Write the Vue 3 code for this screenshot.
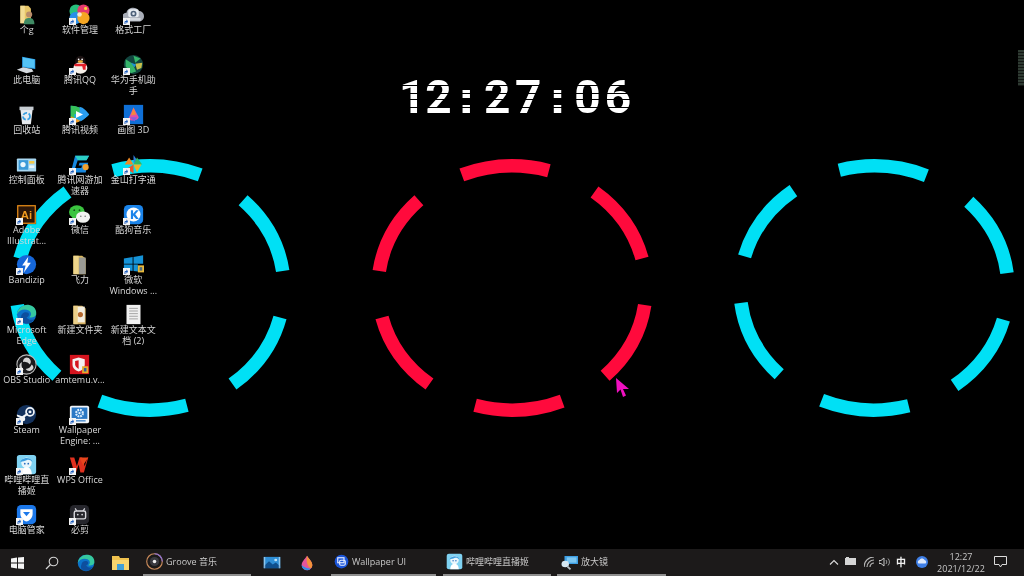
<script setup>
// ring segments: six arcs, 38deg long, every 60deg
const arc = (cx, start) => {
  const rx = 134
  const ry = 122
  const pt = (deg) => {
    const a = (deg * Math.PI) / 180
    return `${(cx + rx * Math.sin(a)).toFixed(1)} ${(288 - ry * Math.cos(a)).toFixed(1)}`
  }
  return [0, 1, 2, 3, 4, 5].map((k) => {
    const s = start + k * 60
    return `M${pt(s)} A${rx} ${ry} 0 0 1 ${pt(s + 38)}`
  })
}

const rings = [
  { id: 'left', color: '#00e0f5', arcs: arc(150, -16) },
  { id: 'mid', color: '#ff0a3c', arcs: arc(512, -22) },
  { id: 'right', color: '#00e0f5', arcs: arc(874, -15) },
]

// the clock's characters sit unevenly, so each one gets its own cell width
const clockChars = [
  { c: '1', w: 26.5 },
  { c: '2', w: 26 },
  { c: ':', w: 29.5 },
  { c: '2', w: 32.5 },
  { c: '7', w: 29.5 },
  { c: ':', w: 29 },
  { c: '0', w: 31 },
  { c: '6', w: 30 },
]

const art = {
  user: '<path d="M5 2h9l3 3v17H5z" fill="#e8c667"/><path d="M5 2h5v20H5z" fill="#f3dc94"/><circle cx="15" cy="12" r="3.5" fill="#b98c6a"/><path d="M9 23c0-6 3-7 6-7s6 1 6 7z" fill="#3f8a63"/>',
  petals: '<circle cx="8" cy="8" r="7.500" fill="#27c07d"/><circle cx="16.500" cy="7.500" r="7" fill="#e5396e"/><circle cx="7.500" cy="16" r="7" fill="#2a8fe8"/><circle cx="16.500" cy="16" r="7" fill="#f5a623"/><circle cx="12" cy="12" r="2.600" fill="#f7e9c8"/><circle cx="19" cy="5" r="1.800" fill="#f3d23c"/>',
  format: '<path d="M4 20a5 5 0 0 1 0-10c1-6 11-8 14-2 4 0 6 3 6 6s-2 6-6 6z" fill="#a9aeb8"/><rect x="6" y="6" width="12" height="9" rx="2" fill="#e9edf2"/><circle cx="12" cy="11" r="3.4" fill="#4e6179"/><circle cx="12" cy="11" r="1.5" fill="#dfe6ef"/><rect x="3" y="16" width="17" height="3" fill="#d5d9df"/>',
  pc: '<path d="M7 3l15 3v11l-15-2z" fill="#2ea0ea"/><path d="M8 4l13 2.5V16L8 14.4z" fill="#54c3f5"/><path d="M1 18l7-3 10 2 2 3-8 2z" fill="#d5dadf"/>',
  qq: '<ellipse cx="13" cy="9" rx="6" ry="7" fill="#1b1212"/><ellipse cx="13" cy="16" rx="8" ry="6.5" fill="#f6f1ea"/><rect x="6" y="11" width="14" height="3" rx="1.5" fill="#e4212b"/><path d="M15 13h4v5h-3z" fill="#e4212b"/><ellipse cx="13" cy="8.5" rx="3" ry="1.4" fill="#f2b233"/><circle cx="11" cy="6" r="1" fill="#fff"/><circle cx="15" cy="6" r="1" fill="#fff"/>',
  huawei: '<circle cx="12" cy="12" r="11" fill="#12453f"/><path d="M3 6l8 5 4 9-6 2-6-8zM12 2l8 3-6 5z" fill="#36b56a"/><path d="M14 11l8-1-1 6-5 2z" fill="#c9c14c"/><path d="M9 10l6 2-2 3z" fill="#1e90d8"/>',
  bin: '<path d="M5 6h14l-2 17H7z" fill="#e7ebef"/><path d="M4 3h16v4H4z" fill="#c6ccd2"/><circle cx="12" cy="14" r="4" fill="none" stroke="#3a9fe0" stroke-width="2" stroke-dasharray="5 2"/>',
  video: '<path d="M2 2c8 0 16 5 21 10-5 5-13 10-21 10z" fill="#1fa8ea"/><path d="M2 2c6 0 11 2 15 5L6 12l1 10-5 0z" fill="#37c25a"/><path d="M12 3c5 1 8 5 11 9-3 3-6 6-10 8z" fill="#2a9df0"/><path d="M2 14v8c4 0 8-1 11-3z" fill="#f49b23"/><path d="M8 8l8 4-8 4z" fill="#fff"/>',
  paint: '<rect x="1" y="1" width="22" height="22" fill="#0f6fd6"/><path d="M12 4l6 11c-1 4-9 5-12 2z" fill="#e24fa6"/><path d="M12 4l-3 9 6-1z" fill="#f2883c"/><path d="M8 15l8 0-3 5z" fill="#8a5be0"/>',
  panel: '<rect x="1" y="5" width="22" height="15" rx="1" fill="#a9d8f2"/><rect x="3" y="7" width="11" height="11" fill="#3c9ad8"/><circle cx="8" cy="12" r="3" fill="#ecf7fd"/><rect x="15" y="8" width="6" height="3" fill="#f2c94c"/><rect x="15" y="13" width="6" height="3" fill="#e9f5fb"/>',
  gbooster: '<path d="M7 2h16l-3 5H10l-3 9h7l1-3h-4l1-3h10l-3 11H2z" fill="#1688e0"/><path d="M7 2h16l-3 5H10z" fill="#2ccfc5"/><circle cx="19" cy="15" r="3.5" fill="#f0a030"/>',
  pinwheel: '<path d="M12 1l6 9h-6z" fill="#2f7fd8"/><path d="M22 12l-10 0 4-8z" fill="#2fb86a"/><path d="M12 12h9l-5 9z" fill="#f0b429"/><path d="M12 12v10l-8-5z" fill="#e9562f"/><path d="M12 12H2l5-8z" fill="#f08a24"/>',
  ai: '<rect x="1" y="1" width="22" height="22" fill="#2c1608"/><rect x="2" y="2" width="20" height="20" fill="none" stroke="#e98e16" stroke-width="1.4"/><text x="12" y="17" font-size="13" font-weight="700" text-anchor="middle" font-family="Liberation Sans, sans-serif" fill="#f09a1e">Ai</text>',
  wechat: '<ellipse cx="9" cy="9" rx="9" ry="7.5" fill="#3bc43f"/><path d="M4 14l-1 4 5-2z" fill="#3bc43f"/><ellipse cx="16" cy="15" rx="8" ry="6.5" fill="#f1f2f0"/><circle cx="6" cy="7" r="1" fill="#144d16"/><circle cx="12" cy="7" r="1" fill="#144d16"/><circle cx="13.5" cy="14" r=".9" fill="#777"/><circle cx="18.5" cy="14" r=".9" fill="#777"/>',
  kugou: '<rect x="1" y="1" width="22" height="22" rx="5" fill="#1b84ea"/><circle cx="12" cy="12" r="8" fill="#fff"/><path d="M9 7h2.500v4l3.500-4h3l-4 4.600L18 17h-3l-3.500-4 0 4H9z" fill="#1b84ea"/>',
  bandizip: '<circle cx="12" cy="12" r="11" fill="#1667d9"/><path d="M14 3l-7 10h4l-2 8 8-11h-4z" fill="#fff"/>',
  folder2: '<path d="M5 2h10l4 3v18H5z" fill="#d9b75e"/><path d="M11 4h8v19h-8z" fill="#9a9a94"/><path d="M5 2h6v21H5z" fill="#eed58b"/>',
  windows: '<path d="M1 5l10-1.500V11H1zM12 3.300l11-1.800V11H12zM1 12h10v7.500L1 18zM12 12h5v8l-5-.6z" fill="#1592d6"/><path d="M17 13h7v8h-7z" fill="#e8b93c"/><path d="M19 15h3v4h-3z" fill="#4c6b7e"/>',
  edge: '<circle cx="12" cy="12" r="11" fill="#0b73c9"/><path d="M1 12C2 4 9 0 15 1c6 1 9 6 8 11-1 3-5 4-8 3 3-2 3-6-1-8C9 5 3 7 1 12z" fill="#36c9a0"/><path d="M6 14c0-3 4-6 8-4 2 2 0 5-2 5 2 3 6 4 9 2-3 6-11 7-15 3-1-2-1-4 0-6z" fill="#0d4f9e"/>',
  newfolder: '<path d="M5 2h10l4 3v18H5z" fill="#d7b265"/><path d="M9 3h9v18H9z" fill="#f3efe2"/><circle cx="13" cy="12" r="3" fill="#b5682d"/><path d="M5 2h5v21H5z" fill="#ecd08a"/>',
  doc: '<path d="M4 1h16v22H4z" fill="#f0f0f0"/><path d="M7 5h10M7 8h10M7 11h10M7 14h10M7 17h10" stroke="#9a9a9a" stroke-width="1"/>',
  obs: '<circle cx="12" cy="12" r="11" fill="#1a1a1c" stroke="#bbb" stroke-width="1.200"/><path d="M12 4a5 5 0 0 1 4 8 8 8 0 0 0-8-3 5 5 0 0 1 4-5zM20 16a5 5 0 0 1-9 1 8 8 0 0 0 7-5 5 5 0 0 1 2 4zM5 17a5 5 0 0 1 2-8 8 8 0 0 0 2 9 5 5 0 0 1-4-1z" fill="#d5d5d5"/>',
  amtemu: '<rect x="1" y="1" width="22" height="22" fill="#d5141e"/><path d="M11 4l7 2v6c0 4-3 7-7 8-4-1-7-4-7-8V6z" fill="#f4f0f0"/><path d="M11 7v10c-2-1-4-3-4-5V8z" fill="#d5141e"/><path d="M15 14h7v8h-7z" fill="#e3ad2c"/><path d="M17 16h3v4h-3z" fill="#345a9c"/>',
  steam: '<circle cx="12" cy="12" r="11" fill="#13315c"/><circle cx="16" cy="9" r="4.500" fill="none" stroke="#f2f5f8" stroke-width="2"/><circle cx="16" cy="9" r="1.700" fill="#f2f5f8"/><path d="M1 14l6 3 7-5-1-2-6 4-6-2z" fill="#f2f5f8"/><circle cx="8" cy="17" r="2.600" fill="#f2f5f8"/>',
  wpe: '<rect x="1" y="2" width="22" height="20" rx="2" fill="#f2f5f8"/><rect x="3" y="4" width="18" height="13" fill="#2a78c5"/><circle cx="12" cy="10.500" r="3.800" fill="none" stroke="#dff0ff" stroke-width="2.400" stroke-dasharray="2 1"/><circle cx="12" cy="10.500" r="1.300" fill="#dff0ff"/><rect x="5" y="18.500" width="14" height="1.500" fill="#3c83c9"/>',
  bililive: '<rect x="1" y="1" width="22" height="22" rx="3" fill="#7fd2f2"/><circle cx="12" cy="10" r="6" fill="#eaf6fb"/><path d="M5 9c1-5 12-7 14 0-3-2-4-3-7-2-2 1-4 1-7 2z" fill="#3f9fe0"/><path d="M6 23c0-6 3-8 6-8s6 2 6 8z" fill="#fff"/><circle cx="10" cy="11" r="1" fill="#2a6fc0"/><circle cx="14" cy="11" r="1" fill="#2a6fc0"/>',
  wps: '<path d="M1 4h5l3 10 3-10 3 0 3 10 3-10-1 0 2 0-5 17h-4l-2-9-3 9H6z" fill="#e0301e"/><path d="M12 4h10l-6 9z" fill="#e8451c"/>',
  guard: '<rect x="1" y="1" width="22" height="22" rx="5" fill="#1c78ea"/><path d="M5 6h14v5c0 5-4 8-7 9-3-1-7-4-7-9z" fill="#fff"/><path d="M8 9h8l-4 5z" fill="#1c78ea"/>',
  bijian: '<rect x="1" y="1" width="22" height="22" rx="5" fill="#26262c"/><rect x="6" y="8" width="13" height="9" rx="2" fill="none" stroke="#d9d9de" stroke-width="1.600"/><circle cx="10" cy="12" r="1" fill="#d9d9de"/><circle cx="15" cy="12" r="1" fill="#d9d9de"/><path d="M9 8l-2-3M16 8l2-3" stroke="#d9d9de" stroke-width="1.400"/>',
  groove: '<circle cx="12" cy="12" r="11" fill="none" stroke="#c98a5a" stroke-width="1.600"/><path d="M12 1a11 11 0 0 1 11 11" fill="none" stroke="#8a6fd8" stroke-width="1.600"/><circle cx="12" cy="12" r="6.500" fill="#3a3a40"/><circle cx="12" cy="12" r="2.500" fill="#eee"/>',
  photos: '<rect x="1" y="3" width="22" height="18" fill="#2f8fd6"/><path d="M1 18l7-8 5 5 4-3 6 6v3H1z" fill="#0f4f8c"/><circle cx="17" cy="8" r="2" fill="#bfe3f8"/><path d="M1 3h2v18H1zM21 3h2v18h-2z" fill="#b7dcf5" opacity=".7"/>',
  drop: '<path d="M12 1c4 6 8 9 8 14a8 8 0 0 1-16 0c0-5 4-8 8-14z" fill="#e4569b"/><path d="M12 1c4 6 8 9 8 14 0 2-1 4-2 5-4-2-8-8-6-19z" fill="#f4923a"/><path d="M4 15a8 8 0 0 0 14 5c-4 1-10-1-14-5z" fill="#2f8fe6"/>',
  wpui: '<circle cx="12" cy="12" r="11" fill="#1b55d8"/><rect x="6" y="6" width="10" height="8" fill="none" stroke="#e9f0ff" stroke-width="1.800"/><rect x="9" y="10" width="9" height="8" rx="2" fill="none" stroke="#e9f0ff" stroke-width="1.800"/>',
  magnifier: '<path d="M6 3h18v12H6z" fill="#3d9fe4"/><path d="M9 5h13v8H9z" fill="#7cc7f2"/><circle cx="7" cy="15" r="5" fill="#d5e7f2"/><path d="M10 19l4 4" stroke="#b9c4cc" stroke-width="2.400"/>',
}

const desktopIcons = [
  { label: '个g', art: 'user' },
  { label: '此电脑', art: 'pc' },
  { label: '回收站', art: 'bin' },
  { label: '控制面板', art: 'panel' },
  { label: 'Adobe Illustrat...', art: 'ai', link: true },
  { label: 'Bandizip', art: 'bandizip', link: true },
  { label: 'Microsoft Edge', art: 'edge', link: true },
  { label: 'OBS Studio', art: 'obs', link: true },
  { label: 'Steam', art: 'steam', link: true },
  { label: '哔哩哔哩直播姬', art: 'bililive', link: true },
  { label: '电脑管家', art: 'guard', link: true },
  { label: '软件管理', art: 'petals', link: true },
  { label: '腾讯QQ', art: 'qq', link: true },
  { label: '腾讯视频', art: 'video', link: true },
  { label: '腾讯网游加速器', art: 'gbooster', link: true },
  { label: '微信', art: 'wechat', link: true },
  { label: '飞力', art: 'folder2' },
  { label: '新建文件夹', art: 'newfolder' },
  { label: 'amtemu.v...', art: 'amtemu' },
  { label: 'Wallpaper Engine: ...', art: 'wpe', link: true },
  { label: 'WPS Office', art: 'wps', link: true },
  { label: '必剪', art: 'bijian', link: true },
  { label: '格式工厂', art: 'format', link: true },
  { label: '华为手机助手', art: 'huawei', link: true },
  { label: '画图 3D', art: 'paint', link: true },
  { label: '金山打字通', art: 'pinwheel', link: true },
  { label: '酷狗音乐', art: 'kugou', link: true },
  { label: '微软 Windows ...', art: 'windows', link: true },
  { label: '新建文本文档 (2)', art: 'doc' },
]
</script>

<template>
  <div class="screen">
    <svg class="rings" width="1024" height="576" viewBox="0 0 1024 576">
      <g v-for="ring in rings" :key="ring.id" :stroke="ring.color" fill="none" stroke-width="13.5">
        <path v-for="d in ring.arcs" :key="d" :d="d" />
      </g>
    </svg>

    <div class="clock"><span v-for="(ch, i) in clockChars" :key="i" class="clock-char" :class="{ colon: ch.c === ':' }" :style="{ width: ch.w + 'px' }">{{ ch.c }}</span></div>

    <div class="widget"></div>

    <svg class="cursor" width="16" height="22" viewBox="0 0 16 22">
      <path d="M1 1l1 15 3.500-3.500L8 20l3-1.500-3-6.500 6 0z" fill="#f010c0" />
    </svg>

    <div class="desktop">
      <div v-for="item in desktopIcons" :key="item.label" class="item">
        <div class="item-icon">
          <svg width="21" height="21" viewBox="0 0 24 24" v-html="art[item.art]"></svg>
          <svg v-if="item.link" class="link" width="7" height="7" viewBox="0 0 7 7">
            <rect width="7" height="7" fill="#f4f4f4" />
            <path d="M2 6V3.500h2M3.200 2l1.800 1.500L3.200 5" fill="none" stroke="#1f5fbf" stroke-width="1" />
          </svg>
        </div>
        <div class="item-label">{{ item.label }}</div>
      </div>
    </div>

    <div class="taskbar">
      <div class="tb-btn start">
        <svg width="13" height="12" viewBox="0 0 13 12">
          <path d="M0 1.500l6-.9V5.500H0zM7 .5l6-.5v5.500H7zM0 6.500h6v4.900l-6-.9zM7 6.500h6V12l-6-.6z" fill="#f4f4f4" />
        </svg>
      </div>
      <div class="tb-btn search">
        <svg width="14" height="14" viewBox="0 0 14 14">
          <circle cx="8.500" cy="5.500" r="4.300" fill="none" stroke="#d5d5d5" stroke-width="1.100" />
          <path d="M5.400 8.600L1 13" stroke="#d5d5d5" stroke-width="1.300" />
        </svg>
      </div>
      <div class="tb-btn"><svg width="18" height="18" viewBox="0 0 24 24" v-html="art.edge"></svg></div>
      <div class="tb-btn">
        <svg width="17" height="15" viewBox="0 0 17 15">
          <path d="M0 1h7l1 2h9v12H0z" fill="#f0c24e" />
          <path d="M0 5h17v10H0z" fill="#f6d56f" />
          <path d="M5 9h7v6H5z" fill="#3f9fd8" />
        </svg>
      </div>
      <div class="task open groove">
        <svg width="17" height="17" viewBox="0 0 24 24" v-html="art.groove"></svg>
        <span>Groove 音乐</span>
      </div>
      <div class="tb-btn"><svg width="18" height="15" viewBox="0 0 24 24" preserveAspectRatio="none" v-html="art.photos"></svg></div>
      <div class="tb-btn"><svg width="16" height="18" viewBox="0 0 24 24" v-html="art.drop"></svg></div>
      <div class="task open wpui">
        <svg width="15" height="15" viewBox="0 0 24 24" v-html="art.wpui"></svg>
        <span>Wallpaper UI</span>
      </div>
      <div class="task open bili">
        <svg width="17" height="17" viewBox="0 0 24 24" v-html="art.bililive"></svg>
        <span>哔哩哔哩直播姬</span>
      </div>
      <div class="task open mag">
        <svg width="18" height="16" viewBox="0 0 24 24" preserveAspectRatio="none" v-html="art.magnifier"></svg>
        <span>放大镜</span>
      </div>

      <div class="tray">
        <svg class="t-caret" width="10" height="6" viewBox="0 0 10 6">
          <path d="M1 5.500l4-4 4 4" fill="none" stroke="#dcdcdc" stroke-width="1.100" />
        </svg>
        <svg class="t-bat" width="12" height="9" viewBox="0 0 12 9">
          <rect y="1" width="11" height="7" fill="#d5d5d5" />
          <rect x="1" width="3" height="2" fill="#d5d5d5" />
        </svg>
        <svg class="t-net" width="11" height="10" viewBox="0 0 11 10">
          <path d="M0 10a10 10 0 0 1 10-10M3 10a7 7 0 0 1 7-7M6 10a4 4 0 0 1 4-4" fill="none" stroke="#b5b5b5" stroke-width="1.200" />
        </svg>
        <svg class="t-vol" width="12" height="10" viewBox="0 0 12 10">
          <path d="M0 3.500h2L5 1v8L2 6.500H0z" fill="none" stroke="#c5c5c5" />
          <path d="M7 3a3 3 0 0 1 0 4M9 1.500a5 5 0 0 1 0 7" fill="none" stroke="#9a9a9a" />
        </svg>
        <span class="t-ime">中</span>
        <svg class="t-cloud" width="12" height="12" viewBox="0 0 12 12">
          <circle cx="6" cy="6" r="6" fill="#3f7fe6" />
          <path d="M2.500 7.500a2 2 0 0 1 1-3.500c1-2 4-2 5 0a2 2 0 0 1 1 3.500z" fill="#dfe9fb" />
        </svg>
        <div class="t-time">
          <span>12:27</span>
          <span>2021/12/22</span>
        </div>
        <svg class="t-note" width="13" height="12" viewBox="0 0 13 12">
          <path d="M.5.500h12v8H8L6.500 11 5 8.500H.5z" fill="none" stroke="#dcdcdc" stroke-width="1" />
        </svg>
      </div>
    </div>
  </div>
</template>

<style scoped>
.screen {
  position: relative;
  width: 1024px;
  height: 576px;
  overflow: hidden;
  background: #000;
  display: flex;
  flex-direction: column;
  font-family: "Open Sans", "Noto Sans", "Noto Sans CJK SC", sans-serif;
  filter: blur(0.4px);
}

.rings {
  position: absolute;
  left: 0;
  top: 0;
}

.clock {
  position: absolute;
  left: 399px;
  top: 70px;
  height: 54px;
  display: flex;
  align-items: baseline;
  font-family: Roboto, sans-serif;
  font-size: 46px;
  line-height: 54px;
  font-weight: 700;
  color: #fff;
  white-space: nowrap;
  /* thin cuts across the real text, for the segmented look */
  mask-image: linear-gradient(to bottom, #000 15px, transparent 15px, transparent 16.5px, #000 16.5px, #000 23px, transparent 23px, transparent 24.5px, #000 24.5px, #000 29px, transparent 29px, transparent 30.5px, #000 30.5px, #000 37px, transparent 37px, transparent 38.5px, #000 38.5px);
}

.clock-char {
  display: flex;
  justify-content: center;
}

.colon {
  font-family: "DejaVu Sans Mono", monospace;
  font-size: 45px;
}

.widget {
  position: absolute;
  right: 0;
  top: 50px;
  width: 6px;
  height: 36px;
  background: repeating-linear-gradient(to bottom, #2e3a32 0 2px, #141815 2px 3px);
}

.cursor {
  position: absolute;
  left: 615px;
  top: 377px;
}

.desktop {
  position: relative;
  flex: 1;
  min-height: 0;
  padding-top: 4px;
  display: grid;
  grid-auto-flow: column;
  grid-template-rows: repeat(11, 50px);
  grid-template-columns: repeat(3, 53.3px);
  align-content: start;
}

.item {
  display: flex;
  flex-direction: column;
  align-items: center;
}

.item-icon {
  position: relative;
  width: 21px;
  height: 21px;
}

.link {
  position: absolute;
  left: 0;
  bottom: 0;
}

.item-label {
  width: 50px;
  margin-top: -1px;
  text-align: center;
  font-size: 9px;
  line-height: 11px;
  color: #d8d8d8;
  overflow-wrap: anywhere;
}

.taskbar {
  position: relative;
  height: 27px;
  flex-shrink: 0;
  background: #1c1a1a;
  display: flex;
  align-items: stretch;
  font-size: 9px;
  color: #c8c8c8;
}

.tb-btn {
  width: 35px;
  display: flex;
  align-items: center;
  justify-content: center;
}

.start {
  width: 35px;
}

.search {
  width: 33px;
}

.task {
  display: flex;
  align-items: center;
  gap: 3px;
  padding-left: 3px;
  box-sizing: border-box;
}

.open {
  border-bottom: 2px solid #8f8f8f;
}

.groove {
  width: 108px;
  margin-left: 5px;
  margin-right: 3px;
}

.wpui {
  width: 105px;
  margin-left: 7px;
  margin-right: 7px;
}

.bili {
  width: 108px;
  margin-right: 6px;
}

.mag {
  width: 109px;
}

.tray {
  position: relative;
  flex: 1;
}

.tray > * {
  position: absolute;
}

.t-caret {
  left: 163px;
  top: 10px;
}

.t-bat {
  left: 179px;
  top: 8px;
}

.t-net {
  left: 198px;
  top: 8px;
}

.t-vol {
  left: 213px;
  top: 8px;
}

.t-ime {
  left: 230px;
  top: 6px;
  width: 10px;
  font-size: 10px;
  line-height: 14px;
  font-weight: 700;
  color: #f0f0f0;
}

.t-cloud {
  left: 250px;
  top: 7px;
}

.t-time {
  left: 261px;
  top: 2px;
  width: 68px;
  display: flex;
  flex-direction: column;
  align-items: center;
  font-size: 9px;
  line-height: 12px;
}

.t-note {
  left: 328px;
  top: 7px;
}
</style>
